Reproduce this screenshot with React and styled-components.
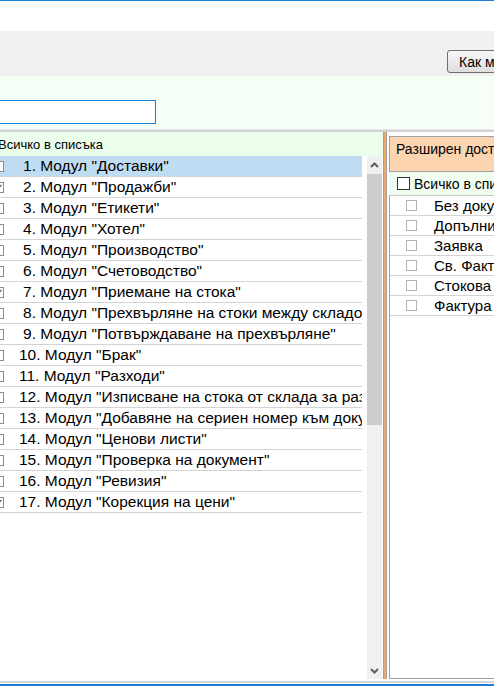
import React from "react";
import styled, { createGlobalStyle } from "styled-components";

const Global = createGlobalStyle`
  html, body { margin: 0; padding: 0; overflow: hidden; background: #fff; }
  body { font-family: "Liberation Sans", Arial, sans-serif; color: #000; width: 494px; height: 686px; }
  * { box-sizing: border-box; }
`;

const Frame = styled.div`
  width: 494px;
  height: 686px;
  overflow: hidden;
  border-top: 1px solid #1b7fd6;
`;

/* the page is scrolled horizontally by 20px */
const Scroller = styled.div`
  margin-left: -20px;
  width: 540px;
  display: flex;
  flex-direction: column;
`;

const WhiteBar = styled.div`
  height: 30px;
  background: #fff;
`;

const Toolbar = styled.div`
  height: 45px;
  background: #f0f0f0;
  display: flex;
  align-items: flex-end;
  padding: 0 0 3px 467px;
`;

const Button = styled.button`
  flex-shrink: 0;
  height: 23px;
  padding: 0 11px;
  border: 1px solid #6f6f6f;
  border-radius: 3px;
  background: linear-gradient(#f7f7f7, #dedede);
  font-family: "Liberation Sans", Arial, sans-serif;
  font-size: 14px;
  color: #000;
  white-space: nowrap;
`;

const FilterArea = styled.div`
  height: 53px;
  background: #f6fff6;
  padding: 24px 0 0 10px;
`;

const Input = styled.input`
  width: 166px;
  height: 24px;
  border: 1px solid #1b7fd6;
  background: #fff;
  outline: none;
`;

const Divider = styled.div`
  height: 3px;
  border-top: 1px solid #e8e8e8;
  background: #d3d3d3;
`;

const Main = styled.div`
  height: 547px;
  display: flex;
`;

const LeftPanel = styled.div`
  width: 403px;
  flex-shrink: 0;
  display: flex;
  flex-direction: column;
`;

const ListHeader = styled.div`
  height: 24px;
  background: #ebfdeb;
  display: flex;
  align-items: center;
  gap: 4px;
  padding-left: ${(p) => p.$pad}px;
  font-size: ${(p) => p.$font}px;
  white-space: nowrap;
`;

const LeftBody = styled.div`
  flex: 1;
  min-height: 0;
  display: flex;
`;

const Rows = styled.div`
  width: 382px;
  margin-right: 5px;
  overflow: hidden;
`;

const Row = styled.div`
  height: 21px;
  border-bottom: 1px solid #d4d4d4;
  display: flex;
  align-items: center;
  padding-left: 13px;
  background: ${(p) => (p.$selected ? "#c0dcf3" : "#fff")};
  font-size: 15.5px;
  white-space: nowrap;
`;

const RowText = styled.span`
  margin-left: ${(p) => p.$indent}px;
`;

const Box = styled.span`
  flex-shrink: 0;
  display: inline-flex;
  align-items: center;
  justify-content: center;
  width: ${(p) => p.$size}px;
  height: ${(p) => p.$size}px;
  border: 1px solid ${(p) => p.$color};
  background: #fff;
`;

const Scrollbar = styled.div`
  width: 15px;
  margin-right: 1px;
  background: #f0f0f0;
  display: flex;
  flex-direction: column;
`;

const Arrow = styled.div`
  height: 17px;
  display: flex;
  align-items: center;
  justify-content: center;
`;

const Thumb = styled.div`
  height: 251px;
  margin-top: 1px;
  background: #cdcdcd;
`;

const Spacer = styled.div`
  flex: 1;
`;

const Splitter = styled.div`
  width: 4px;
  flex-shrink: 0;
  border-left: 1px solid #a0a0a0;
  border-right: 1px solid #a0a0a0;
  background: #f2a862;
`;

const RightPanel = styled.div`
  flex: 1;
  margin-left: 2px;
  padding-top: 4px;
  display: flex;
  flex-direction: column;
`;

const RightHeader = styled.div`
  height: 36px;
  border: 1px solid #a0a0a0;
  background: #fcd5b0;
  padding: 4px 6px;
  font-size: 14px;
  white-space: nowrap;
`;

const RightAll = styled(ListHeader)`
  height: 23px;
  background: #effcef;
`;

const RightList = styled.div`
  flex: 1;
  border-left: 1px solid #a0a0a0;
  border-bottom: 1px solid #a0a0a0;
  border-top: 1px solid #c8c8c8;
`;

const RightRow = styled.div`
  height: 20px;
  border-bottom: 1px solid #d4d4d4;
  display: flex;
  align-items: center;
  gap: 17px;
  padding-left: 16px;
  font-size: 15px;
  white-space: nowrap;
`;

const Footer = styled.div`
  height: 7px;
  padding-top: 2px;
  display: flex;
  flex-direction: column;
`;

const FooterGray = styled.div`
  height: 2px;
  background: #d4d4d4;
`;

const FooterBlue = styled.div`
  height: 2px;
  margin-top: 1px;
  background: #1b7fd6;
`;

const Check = () => (
  <svg width="9" height="9" viewBox="0 0 9 9">
    <path d="M1.5 4.5 L3.5 6.8 L7.5 1.8" fill="none" stroke="#555" strokeWidth="1.1" />
  </svg>
);

const Chevron = ({ down }) => (
  <svg width="9" height="6" viewBox="0 0 9 6">
    <path
      d={down ? "M1 1 L4.5 4.5 L8 1" : "M1 5 L4.5 1.5 L8 5"}
      fill="none"
      stroke="#606060"
      strokeWidth="2"
    />
  </svg>
);

const modules = [
  "Доставки",
  "Продажби",
  "Етикети",
  "Хотел",
  "Производство",
  "Счетоводство",
  "Приемане на стока",
  "Прехвърляне на стоки между складовете",
  "Потвърждаване на прехвърляне",
  "Брак",
  "Разходи",
  "Изписване на стока от склада за разход",
  "Добавяне на сериен номер към документ",
  "Ценови листи",
  "Проверка на документ",
  "Ревизия",
  "Корекция на цени",
];

const checked = new Set([2, 7, 17]);

const docs = [
  "Без документ",
  "Допълнителен документ",
  "Заявка",
  "Св. Фактура",
  "Стокова разписка",
  "Фактура",
];

export default function App() {
  return (
    <>
      <Global />
      <Frame>
        <Scroller>
          <WhiteBar />
          <Toolbar>
            <Button>Как мога да помогна</Button>
          </Toolbar>
          <FilterArea>
            <Input />
          </FilterArea>
          <Divider />
          <Main>
            <LeftPanel>
              <ListHeader $pad={1} $font={13}>
                <Box $size={13} $color="#333" />
                <span>Всичко в списъка</span>
              </ListHeader>
              <LeftBody>
                <Rows>
                  {modules.map((m, i) => {
                    const n = i + 1;
                    return (
                      <Row key={n} $selected={n === 1}>
                        <Box $size={11} $color="#8c8c8c">
                          {checked.has(n) && <Check />}
                        </Box>
                        <RowText $indent={n < 10 ? 19 : 15}>
                          {n}. Модул "{m}"
                        </RowText>
                      </Row>
                    );
                  })}
                </Rows>
                <Scrollbar>
                  <Arrow>
                    <Chevron />
                  </Arrow>
                  <Thumb />
                  <Spacer />
                  <Arrow>
                    <Chevron down />
                  </Arrow>
                </Scrollbar>
              </LeftBody>
            </LeftPanel>
            <Splitter />
            <RightPanel>
              <RightHeader>Разширен достъп до документи</RightHeader>
              <RightAll $pad={8} $font={14}>
                <Box $size={13} $color="#333" />
                <span>Всичко в списъка</span>
              </RightAll>
              <RightList>
                {docs.map((d) => (
                  <RightRow key={d}>
                    <Box $size={11} $color="#b4b4b4" />
                    <span>{d}</span>
                  </RightRow>
                ))}
              </RightList>
            </RightPanel>
          </Main>
          <Footer>
            <FooterGray />
            <FooterBlue />
          </Footer>
        </Scroller>
      </Frame>
    </>
  );
}
